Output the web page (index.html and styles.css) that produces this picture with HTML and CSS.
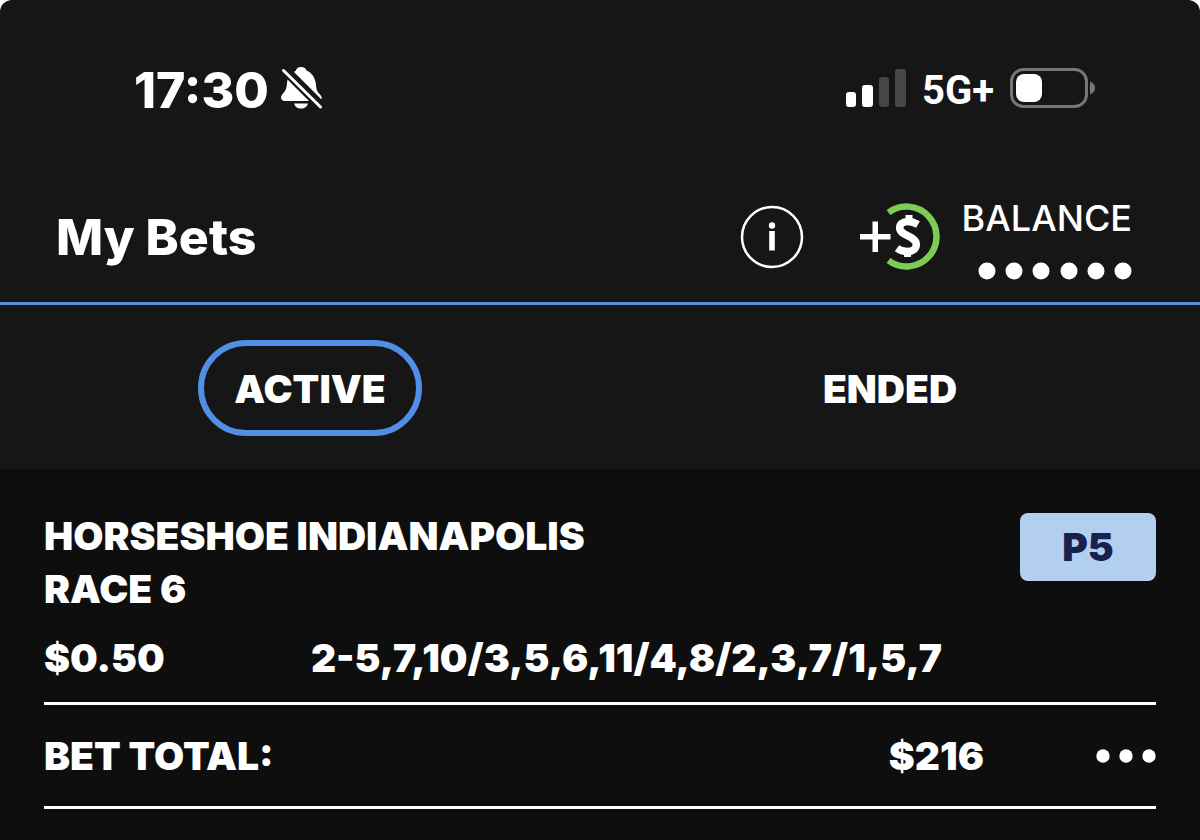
FILE: index.html
```html
<!DOCTYPE html>
<html lang="en">
	<head>
		<meta charset="UTF-8">
		<meta name="viewport" content="width=device-width, initial-scale=1">
		<title>My Bets</title>
		<link rel="stylesheet" href="styles.css">
	</head>
	<body>
		<div class="screen">
			<div class="status">
				<div class="clock">
					<span class="time">17:30</span>
					<svg class="bell" viewBox="0 0 42 42" width="42" height="42" aria-hidden="true">
						<path fill="#fff" d="M20 0c3 0 5 1.500 5.500 3.500C31 6 34.500 11 35 18c.4 5 1.500 7 4 9.500 1.500 1.500 2 3 1.500 5L13 5c.6-.6 1.300-1 2-1.500C15.500 1.500 17 0 20 0z"/>
						<path fill="#fff" d="M6.500 12.500L28 34H4c-2.500 0-4-1.500-4-3.500 0-1.500.8-2.700 2-4C5 23.500 5.800 20 6 16z"/>
						<path fill="#fff" d="M13 36.500h14c-.8 3-3.600 5-7 5s-6.200-2-7-5z"/>
						<path stroke="#fff" stroke-width="3" stroke-linecap="round" d="M2.500 3.500L39.500 40"/>
					</svg>
				</div>
				<div class="signals">
					<svg viewBox="0 0 60 38" width="60" height="38" aria-hidden="true">
						<rect x="0" y="23" width="10" height="15" rx="3" fill="#fff"/>
						<rect x="16" y="16" width="11" height="22" rx="3" fill="#fff"/>
						<rect x="33" y="8" width="10" height="30" rx="3" fill="#464646"/>
						<rect x="49" y="0" width="11" height="38" rx="3" fill="#464646"/>
					</svg>
					<span class="network">5G+</span>
					<svg viewBox="0 0 86 40" width="86" height="40" aria-hidden="true">
						<rect x="1.500" y="1.500" width="75" height="37" rx="12" fill="none" stroke="#777" stroke-width="3"/>
						<rect x="6" y="6" width="26" height="28" rx="8" fill="#fff"/>
						<path fill="#777" d="M80 13.500c3 .8 5 3.400 5 6.500S83 25.700 80 26.500z"/>
					</svg>
				</div>
			</div>
			<header class="header">
				<h1>My Bets</h1>
				<button type="button" class="icon info" aria-label="Info">
					<svg viewBox="0 0 64 64" width="64" height="64">
						<circle cx="32" cy="32" r="30" fill="none" stroke="#fff" stroke-width="2.500"/>
						<circle cx="32" cy="20.500" r="3.200" fill="#fff"/>
						<path fill="#fff" d="M29.200 26h5.600v19.500h-5.600z"/>
					</svg>
				</button>
				<button type="button" class="icon deposit" aria-label="Deposit">
					<svg viewBox="0 0 80 68" width="80" height="68">
						<path fill="none" stroke="#7bcd55" stroke-width="6.500" d="M28.500 9.500A30 30 0 1 1 28.500 57.500"/>
						<path fill="#fff" d="M12.500 18.500H18v12.500h12.500v5.500H18v12.500h-5.500V36.500H0V31h12.500z"/>
						<path fill="none" stroke="#fff" stroke-width="7.500" d="M58 21.500C54.500 19.500 51.500 18.500 48 18.500c-5.200 0-8.300 2.600-8.300 6.300 0 4.300 4 5.900 8.300 8.100 4.700 2.400 8.300 4.400 8.300 8.700 0 4.400-3.800 7-9 7-4 0-7.300-1.200-10.300-3.400"/>
						<path fill="#fff" d="M45.500 12h7v8h-7zM44 46h7v8h-7z"/>
					</svg>
				</button>
				<div class="balance">
					<span class="label">BALANCE</span>
					<svg viewBox="0 0 154 18" width="154" height="18" role="img" aria-label="Balance hidden">
						<g fill="#fff">
							<circle cx="9" cy="9" r="8.500"/>
							<circle cx="36" cy="9" r="8.500"/>
							<circle cx="63" cy="9" r="8.500"/>
							<circle cx="91" cy="9" r="8.500"/>
							<circle cx="118" cy="9" r="8.500"/>
							<circle cx="145" cy="9" r="8.500"/>
						</g>
					</svg>
				</div>
			</header>
			<nav class="tabs">
				<button type="button" class="tab active">ACTIVE</button>
				<button type="button" class="tab">ENDED</button>
			</nav>
			<main class="bets">
				<div class="race">
					<h2>HORSESHOE INDIANAPOLIS<br>RACE 6</h2>
					<span class="badge">P5</span>
				</div>
				<div class="ticket">
					<span>$0.50</span>
					<span>2-5,7,10/3,5,6,11/4,8/2,3,7/1,5,7</span>
				</div>
				<div class="total">
					<span>BET TOTAL:</span>
					<span class="amount">$216</span>
					<button type="button" class="icon" aria-label="More">
						<svg viewBox="0 0 60 14" width="60" height="14">
							<g fill="#fff">
								<circle cx="7" cy="7" r="6.700"/>
								<circle cx="30" cy="7" r="6.700"/>
								<circle cx="53" cy="7" r="6.700"/>
							</g>
						</svg>
					</button>
				</div>
			</main>
		</div>
	</body>
</html>
```

FILE: styles.css
```css
*{
	margin:0;
	padding:0;
	box-sizing:border-box;
}
body{
	background:#fff;
	color:#fff;
	font-family:Inter,"Liberation Sans",sans-serif;
}
svg{
	display:block;
	flex:none;
}
button{
	background:none;
	border:none;
	color:inherit;
	font:inherit;
	cursor:pointer;
}
.screen{
	display:flex;
	flex-direction:column;
	min-height:100vh;
	background:#161616;
	border-radius:12px 12px 0 0;
}
.status{
	display:flex;
	justify-content:space-between;
	align-items:center;
	height:176px;
	padding:0 104px 0 134px;
}
.clock,.signals{
	display:flex;
	align-items:center;
}
.clock{
	gap:12px;
}
.time{
	padding-top:4px;
	font-size:50px;
	font-weight:800;
	line-height:56px;
}
.signals{
	gap:16px;
}
.network{
	padding-top:6px;
	font-family:Roboto,sans-serif;
	font-size:40px;
	font-weight:700;
	line-height:48px;
}
.header{
	display:flex;
	align-items:center;
	height:129px;
	padding:0 68px 4px 56px;
	border-bottom:3px solid #5b8fdc;
}
.header h1{
	margin-right:auto;
	font-size:50px;
	font-weight:800;
	line-height:56px;
}
.deposit{
	margin-left:56px;
}
.balance{
	display:flex;
	flex-direction:column;
	align-items:flex-end;
	gap:20px;
	margin-left:22px;
}
.label{
	font-size:36px;
	font-weight:500;
	line-height:48px;
}
/* 选项卡 */
.tabs{
	display:flex;
	align-items:center;
	height:164px;
	padding:2px 20px 0;
}
.tab{
	width:224px;
	height:96px;
	margin:0 auto;
	border:6px solid transparent;
	font-size:39px;
	font-weight:900;
}
.active{
	border-color:#518fe6;
	border-radius:48px;
}
.bets{
	flex:1;
	padding:40px 44px 0;
	background:#0e0e0e;
	font-size:39px;
	font-weight:900;
	line-height:53px;
}
.race{
	display:flex;
	justify-content:space-between;
	align-items:flex-start;
}
.race h2{
	font-size:inherit;
	font-weight:inherit;
}
.badge{
	width:136px;
	margin-top:4px;
	padding:8px 0;
	border-radius:8px;
	background:#b3cfef;
	color:#17204f;
	line-height:52px;
	text-align:center;
}
.ticket{
	display:grid;
	grid-template-columns:24% 1fr;
	padding:16px 0 18px;
	border-bottom:3px solid #fff;
}
.total{
	display:flex;
	align-items:center;
	padding:24px 0;
	border-bottom:3px solid #fff;
}
.amount{
	margin-left:auto;
	margin-right:112px;
}
```
